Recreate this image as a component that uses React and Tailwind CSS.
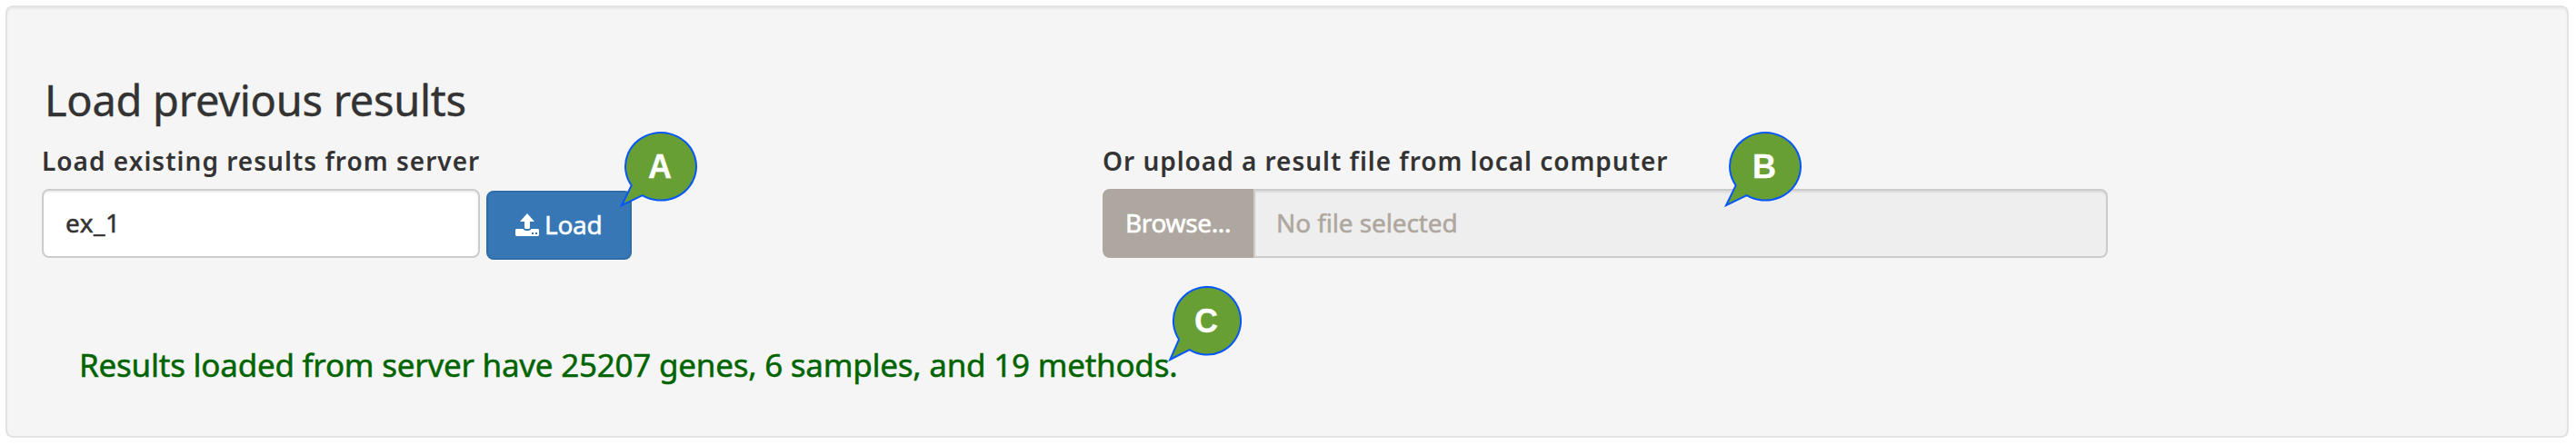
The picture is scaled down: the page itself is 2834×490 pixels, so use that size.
function Callout({ letter, className, wide }) {
  return (
    <div className={`absolute ${className}`}>
      <svg width="88" height="88" viewBox="0 0 88 88" className="block">
        <path
          d={
            wide
              ? "M14.700 59.200A39 37.300 0 1 1 26.700 70.150L4 81.200Z"
              : "M13 58.800A37.100 37.300 0 1 1 24.700 70.150L3.200 81Z"
          }
          fill="#689f35"
          stroke="#0556ff"
          strokeWidth="2"
        />
      </svg>
      <span
        className={`absolute top-[18px] text-center font-['Liberation_Sans',Arial,sans-serif] text-[36px] leading-[42px] font-bold text-white [-webkit-text-stroke:0.3px] ${
          wide ? "left-1.5 w-20" : "left-[5px] w-[76px]"
        }`}
      >
        {letter}
      </span>
    </div>
  );
}

function UploadIcon() {
  return (
    <svg width="26" height="26" viewBox="0 0 26 26" fill="#fff" className="block">
      <path d="M13 0L21 9H16V15.500A1.500 1.500 0 0 1 14.500 17H11.500A1.500 1.500 0 0 1 10 15.500V9H5Z" />
      <path
        fillRule="evenodd"
        d="M1.400 17H8.500C9.200 18.400 10.600 19 13 19S16.800 18.400 17.500 17H24.600A1.400 1.400 0 0 1 26 18.400V23.600A1.400 1.400 0 0 1 24.600 25H1.400A1.400 1.400 0 0 1 0 23.600V18.400A1.400 1.400 0 0 1 1.400 17ZM18 21V23H20V21ZM22 21V23H24V21Z"
      />
    </svg>
  );
}

export default function App() {
  return (
    <div className="h-[490px] w-[2834px] bg-white p-1.5 font-['Noto_Sans',sans-serif] text-[28px] text-[#333]">
      <div className="relative h-[476px] w-[2820px] rounded-lg border-2 border-[#e3e3e3] bg-[#f5f5f5] pt-[74px] pl-[38px] shadow-[inset_0_2px_2px_rgba(0,0,0,0.05)]">
        <h3 className="ml-[3px] text-[47px] leading-[56px] font-normal tracking-[-0.29px] [-webkit-text-stroke:0.4px]">
          Load previous results
        </h3>

        <div className="mt-[19px] flex">
          <div className="w-[1167px]">
            <label className="block leading-10 font-semibold tracking-[1.02px]">
              Load existing results from server
            </label>
            <div className="mt-[11px] flex items-start gap-[7px]">
              <div className="flex h-[76px] w-[482px] items-center rounded-lg border-2 border-[#ccc] bg-white pb-0.5 pl-6 tracking-[0.5px] shadow-[inset_0_2px_2px_rgba(0,0,0,0.075)] [-webkit-text-stroke:0.5px]">
                ex_1
              </div>
              <button className="mt-0.5 flex h-[76px] w-40 items-center rounded-lg border-2 border-[#2e6da4] bg-[#3777b6] pl-[30px] text-white">
                <UploadIcon />
                <span className="ml-1.5 pb-[3px] tracking-[-0.27px] [-webkit-text-stroke:0.5px]">
                  Load
                </span>
              </button>
            </div>
          </div>

          <div className="w-[1106px]">
            <label className="block leading-10 font-semibold tracking-[0.97px]">
              Or upload a result file from local computer
            </label>
            <div className="mt-[11px] flex h-[76px]">
              <button className="flex w-[166px] items-center rounded-l-lg bg-[#aea79f] pb-0.5 pl-[25px] tracking-[-0.35px] text-white [-webkit-text-stroke:0.6px]">
                Browse...
              </button>
              <div className="flex flex-1 items-center rounded-r-lg border-2 border-[#ccc] bg-[#eee] pb-0.5 pl-[23px] tracking-[-0.12px] text-[#aea79f] shadow-[inset_0_2px_2px_rgba(0,0,0,0.075)] [-webkit-text-stroke:0.5px]">
                No file selected
              </div>
            </div>
          </div>
        </div>

        <p className="mt-[91px] ml-[41px] text-[35px] leading-[50px] tracking-[-0.24px] text-[#006400] [-webkit-text-stroke:0.5px]">
          Results loaded from server have 25207 genes, 6 samples, and 19 methods.
        </p>

        <Callout letter="A" wide className="top-[137px] left-[672px]" />
        <Callout letter="B" wide className="top-[137px] left-[1887px]" />
        <Callout letter="C" className="top-[307px] left-[1276px]" />
      </div>
    </div>
  );
}
